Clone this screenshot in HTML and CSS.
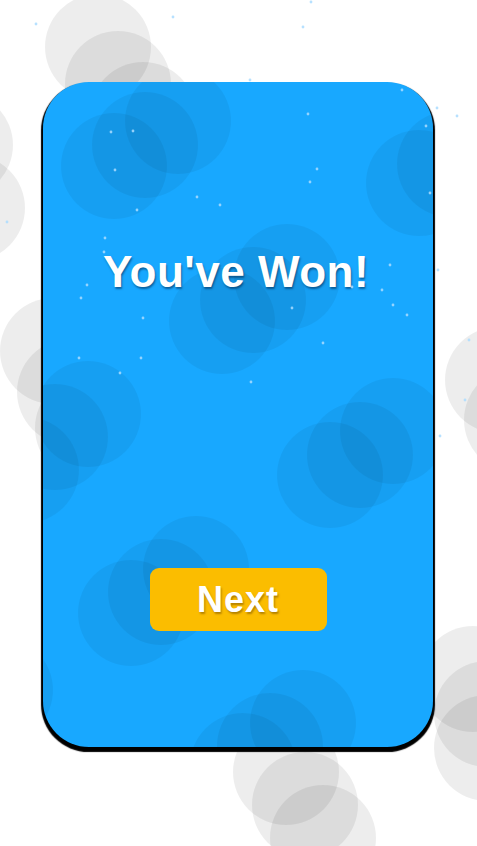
FILE: index.html
```html
<!DOCTYPE html>
<html>
<head>
<meta charset="utf-8">
<link rel="stylesheet" href="styles.css">
</head>
<body>
<svg class="bg" width="477" height="846" viewBox="0 0 477 846">
  <g class="grey">
    <circle cx="98" cy="47" r="53"/><circle cx="118" cy="84" r="53"/><circle cx="143" cy="115" r="53"/>
    <circle cx="-40" cy="145" r="53"/><circle cx="-28" cy="208" r="53"/>
    <circle cx="53" cy="351" r="53"/><circle cx="70" cy="392" r="53"/><circle cx="88" cy="428" r="53"/>
    <circle cx="498" cy="380" r="53"/><circle cx="517" cy="420" r="53"/>
    <circle cx="473" cy="679" r="53"/><circle cx="487" cy="714" r="53"/><circle cx="487" cy="748" r="53"/>
    <circle cx="286" cy="772" r="53"/><circle cx="305" cy="805" r="53"/><circle cx="323" cy="838" r="53"/>
  </g>
</svg>
<div class="stage">
  <div class="card">
    <svg class="card-bg" width="390" height="665" viewBox="43 82 390 665">
      <g class="blue">
        <circle cx="114" cy="166" r="53"/><circle cx="145" cy="145" r="53"/><circle cx="178" cy="121" r="53"/>
        <circle cx="419" cy="183" r="53"/><circle cx="450" cy="164" r="53"/>
        <circle cx="222" cy="321" r="53"/><circle cx="253" cy="300" r="53"/><circle cx="287" cy="277" r="53"/>
        <circle cx="88" cy="414" r="53"/><circle cx="55" cy="437" r="53"/><circle cx="26" cy="470" r="53"/>
        <circle cx="393" cy="431" r="53"/><circle cx="360" cy="455" r="53"/><circle cx="330" cy="475" r="53"/>
        <circle cx="196" cy="569" r="53"/><circle cx="161" cy="592" r="53"/><circle cx="131" cy="613" r="53"/>
        <circle cx="303" cy="723" r="53"/><circle cx="270" cy="746" r="53"/><circle cx="243" cy="766" r="53"/>
        <circle cx="0" cy="690" r="53"/>
      </g>
    </svg>
    <h1 class="title">You've Won!</h1>
    <button class="next">Next</button>
  </div>
</div>
<svg class="dots" width="477" height="846" viewBox="0 0 477 846">
  <g class="dot">
    <circle cx="111" cy="132" r="1.4"/><circle cx="133" cy="131" r="1.4"/><circle cx="115" cy="170" r="1.4"/>
    <circle cx="197" cy="197" r="1.4"/><circle cx="220" cy="205" r="1.4"/><circle cx="137" cy="210" r="1.4"/>
    <circle cx="105" cy="238" r="1.4"/><circle cx="104" cy="252" r="1.4"/><circle cx="308" cy="114" r="1.4"/>
    <circle cx="317" cy="169" r="1.4"/><circle cx="310" cy="182" r="1.4"/><circle cx="402" cy="90" r="1.4"/>
    <circle cx="426" cy="126" r="1.4"/><circle cx="430" cy="193" r="1.4"/><circle cx="390" cy="265" r="1.4"/>
    <circle cx="437" cy="108" r="1.4"/><circle cx="457" cy="116" r="1.4"/><circle cx="36" cy="24" r="1.4"/>
    <circle cx="173" cy="17" r="1.4"/><circle cx="303" cy="27" r="1.4"/><circle cx="311" cy="2" r="1.4"/>
    <circle cx="250" cy="80" r="1.4"/><circle cx="7" cy="222" r="1.4"/><circle cx="438" cy="270" r="1.4"/>
    <circle cx="87" cy="285" r="1.4"/><circle cx="81" cy="298" r="1.4"/><circle cx="143" cy="318" r="1.4"/>
    <circle cx="79" cy="358" r="1.4"/><circle cx="141" cy="358" r="1.4"/><circle cx="120" cy="373" r="1.4"/>
    <circle cx="251" cy="382" r="1.4"/><circle cx="292" cy="308" r="1.4"/><circle cx="323" cy="343" r="1.4"/>
    <circle cx="352" cy="287" r="1.4"/><circle cx="382" cy="290" r="1.4"/><circle cx="393" cy="305" r="1.4"/>
    <circle cx="407" cy="315" r="1.4"/><circle cx="469" cy="340" r="1.4"/><circle cx="465" cy="400" r="1.4"/>
    <circle cx="440" cy="436" r="1.4"/>
  </g>
</svg>
</body>
</html>
```
FILE: styles.css
```css
html, body {
  margin: 0;
  padding: 0;
}
body {
  width: 477px;
  height: 846px;
  overflow: hidden;
  background: #ffffff;
  position: relative;
  font-family: "Liberation Sans", Arial, sans-serif;
}
.bg {
  position: absolute;
  left: 0;
  top: 0;
  z-index: 0;
}
.grey circle {
  fill: rgba(0, 0, 0, 0.07);
}
.stage {
  position: relative;
  z-index: 1;
  display: flex;
  padding-top: 82px;
  padding-left: 43px;
}
.card {
  position: relative;
  width: 390px;
  height: 665px;
  background: #18a8ff;
  border-radius: 46px;
  box-shadow: 0 3px 1px 1.5px #000;
  overflow: hidden;
  display: flex;
  flex-direction: column;
  align-items: center;
}
.card-bg {
  position: absolute;
  left: 0;
  top: 0;
}
.blue circle {
  fill: rgba(0, 0, 0, 0.05);
}
.title {
  position: relative;
  margin: 168px 0 0 -4px;
  font-size: 44px;
  line-height: 44px;
  font-weight: bold;
  letter-spacing: 0.5px;
  color: #ffffff;
  text-shadow: 1px 2px 2px rgba(0, 40, 80, 0.55);
}
.next {
  position: relative;
  margin-top: 274px;
  width: 177px;
  height: 63px;
  border: 0;
  border-radius: 9px;
  background: #fbbd00;
  color: #ffffff;
  font-family: "Liberation Sans", Arial, sans-serif;
  font-weight: bold;
  font-size: 36px;
  line-height: 63px;
  letter-spacing: 1px;
  padding: 0;
  text-shadow: 1px 2px 2px rgba(120, 80, 0, 0.55);
}
.dots {
  position: absolute;
  left: 0;
  top: 0;
  z-index: 3;
  pointer-events: none;
}
.dot circle {
  fill: rgba(170, 220, 255, 0.85);
}
```
